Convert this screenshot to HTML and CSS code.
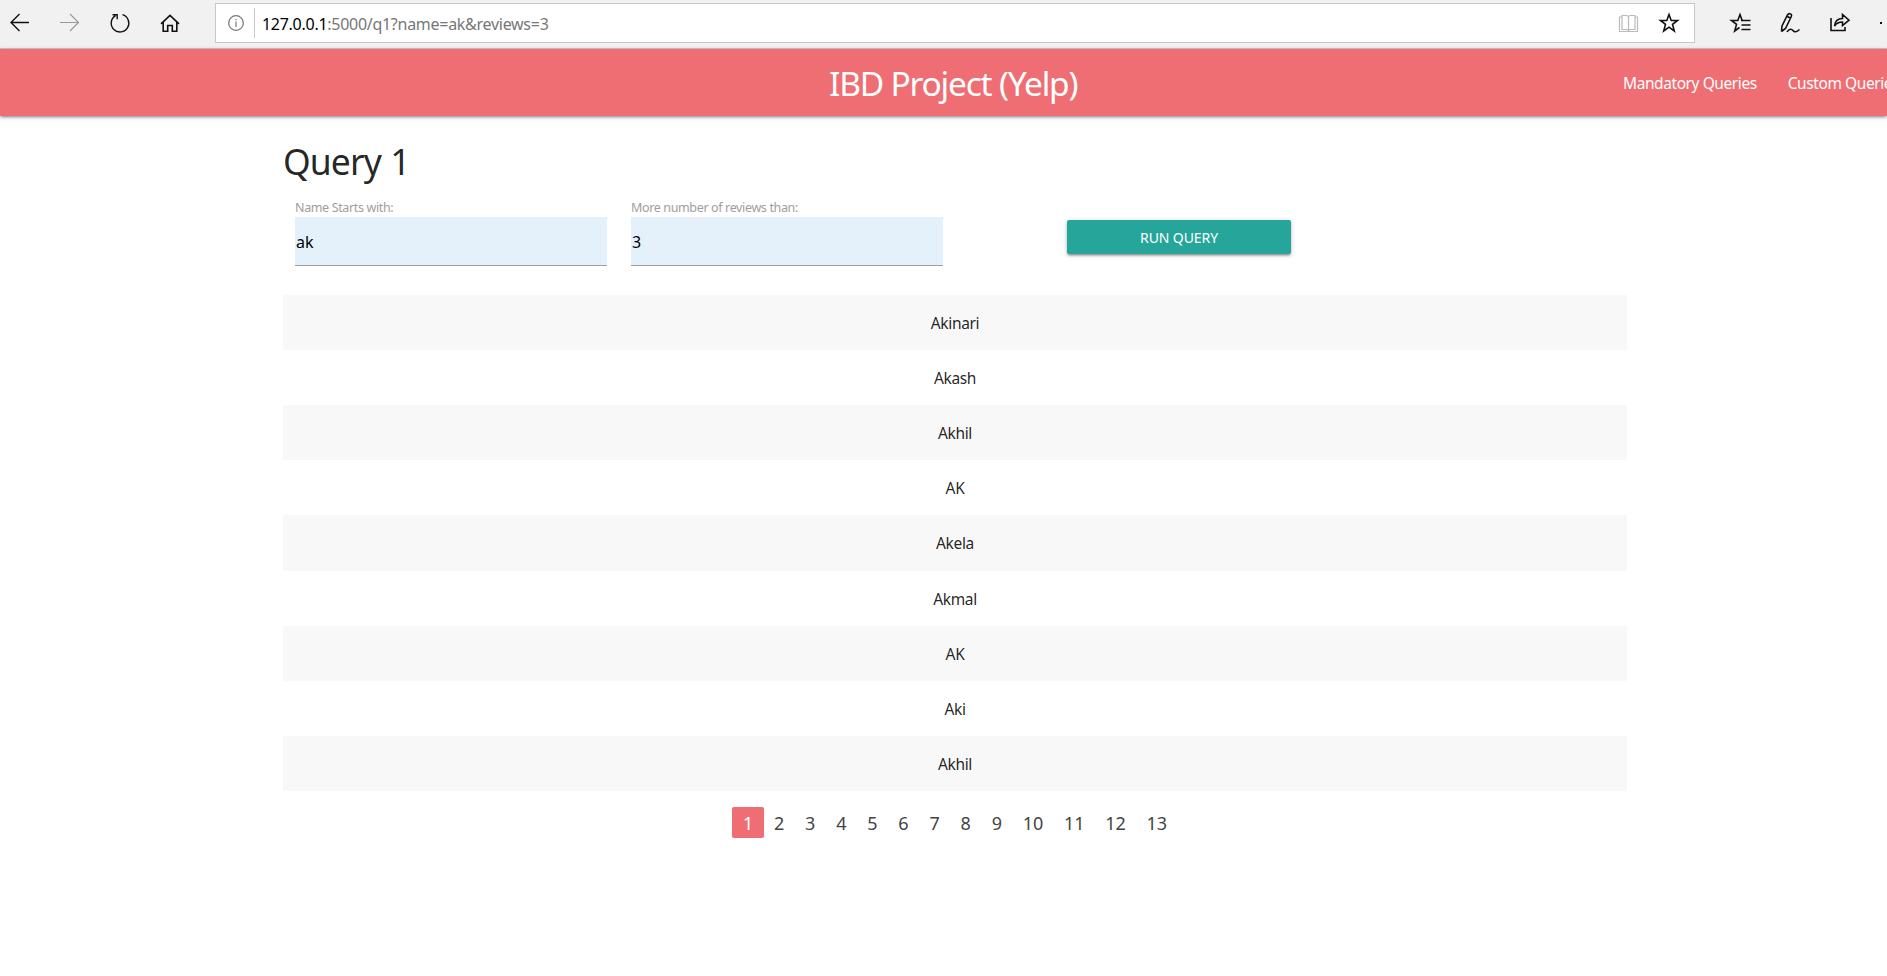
FILE: index.html
```html
<!DOCTYPE html>
<html lang="en">
<head>
<meta charset="utf-8">
<title>IBD Project (Yelp)</title>
<link rel="stylesheet" href="styles.css">
</head>
<body>
<div class="browser">
  <div class="controls">
    <svg class="icon" viewBox="0 0 24 24"><path class="medium" d="M3 11.500H21M11.500 3L3 11.500L11.500 20"/></svg>
    <svg class="icon muted" viewBox="0 0 24 24"><path d="M2 11.500H20.500M12 3L20.500 11.500L12 20"/></svg>
    <svg class="icon" viewBox="0 0 24 24"><path class="medium" d="M14.500 3.700A8.800 8.800 0 1 1 7.500 4.600M4.500 3.700H9.200V8.300"/></svg>
    <svg class="icon" viewBox="0 0 24 24"><path class="bold" d="M3 12.800L12 4.300L21 12.800M5.200 11V20.300H9.700V14.500H14.300V20.300H18.800V11"/></svg>
  </div>
  <div class="address">
    <svg class="icon info" viewBox="0 0 24 24"><circle cx="12" cy="12" r="7.300"/><path d="M12 10.500V16M12 8V9.300"/></svg>
    <div class="url"><span class="host">127.0.0.1</span>:5000/q1?name=ak&amp;reviews=3</div>
    <svg class="icon book" viewBox="0 0 24 24"><path d="M6 4.500H11L12.500 5.500L14 4.500H19V18.500H14L12.500 19.500L11 18.500H6ZM12.500 5.500V19.500M6 6H3.500V20.500H21.500V6H19"/></svg>
    <svg class="icon star" viewBox="0 0 24 24"><path class="bold" d="M12 3.500L14.200 9.500H20.500L15.500 13.400L17.300 20L12 16.200L6.700 20L8.500 13.400L3.500 9.500H9.800Z"/></svg>
  </div>
  <div class="tools">
    <svg class="icon" viewBox="0 0 24 24"><path class="bold" d="M14.700 9.500H13.200L11 3.500L8.800 9.500H2.500L7.500 13.400L5.700 20L10.500 16.500M12 9.500H21.500M12.500 14H21.500M12.500 18.500H21.500"/></svg>
    <svg class="icon" viewBox="0 0 24 24"><path class="bold" d="M2.500 20.500L3 15L8.500 4C10 1.500 13.500 3 12.300 5.500L6.500 17.500L2.500 20.500M8.500 5.500L12 7.500M8 21C10 17 13 18 14 19.500S17.500 21.500 20.500 18.500"/></svg>
    <svg class="icon" viewBox="0 0 24 24"><path class="bold" d="M2 7V19.500H16V16M5.500 15C6 10 9 7.500 13.500 7.500V3.500L20 9.200L13.500 14.500V11C10 11 7.500 12 5.500 15Z"/></svg>
    <span class="dot"></span>
  </div>
</div>
<nav class="navbar">
  <a class="brand">IBD Project (Yelp)</a>
  <div class="links"><a>Mandatory Queries</a><a>Custom Queries</a></div>
</nav>
<main class="container">
  <h4 class="heading">Query 1</h4>
  <form class="form">
    <div class="field"><label class="label">Name Starts with:</label><div class="input">ak</div></div>
    <div class="field"><label class="label">More number of reviews than:</label><div class="input">3</div></div>
    <button class="btn" type="button">RUN QUERY</button>
  </form>
  <div class="rows">
    <div class="row">Akinari</div>
    <div class="row">Akash</div>
    <div class="row">Akhil</div>
    <div class="row">AK</div>
    <div class="row">Akela</div>
    <div class="row">Akmal</div>
    <div class="row">AK</div>
    <div class="row">Aki</div>
    <div class="row">Akhil</div>
  </div>
  <ul class="pagination">
    <li class="active">1</li><li>2</li><li>3</li><li>4</li><li>5</li><li>6</li><li>7</li><li>8</li><li>9</li><li class="wide">10</li><li class="wide">11</li><li class="wide">12</li><li class="wide">13</li>
  </ul>
</main>
</body>
</html>
```
FILE: styles.css
```css
* { box-sizing: border-box; }
body { margin: 0; height: 976px; overflow: hidden; background: #fff; color: rgba(0,0,0,.87); font: 15px/1.5 "Noto Sans", "Open Sans", sans-serif; }
.browser { height: 49px; display: flex; align-items: flex-start; background: #f1f1f1; border-bottom: 1px solid #c6c6c6; padding-top: 3px; }
.controls { display: flex; width: 215px; padding: 8px 0 0 8px; gap: 26px; }
.icon { width: 24px; height: 24px; flex: none; fill: none; stroke: #111; stroke-width: 1.200; }
.medium { stroke-width: 1.400; }
.bold { stroke-width: 1.600; }
.muted { stroke: #999; }
.address { width: 1480px; height: 40px; flex: none; display: flex; align-items: center; background: #fff; border: 1px solid #c8c8c8; padding: 0 13px 0 8px; }
.info { stroke: #777; }
.url { flex: 1; height: 30px; margin-left: 6px; padding-left: 7px; border-left: 1px solid #c8c8c8; line-height: 32px; font-size: 16px; letter-spacing: -.28px; color: #777; }
.host { color: #000; }
.book { stroke: #bbb; margin-right: 17px; }
.tools { display: flex; align-items: center; flex: none; padding: 8px 0 0 34px; gap: 26px; }
.dot { width: 2px; height: 2px; background: #111; margin-left: 1px; }
.navbar { height: 67px; background: #ee6e73; color: #fff; display: grid; grid-template-columns: 1623px auto; box-shadow: 0 2px 2px rgba(0,0,0,.14), 0 3px 1px -2px rgba(0,0,0,.12), 0 1px 5px rgba(0,0,0,.2); line-height: 69px; white-space: nowrap; }
.brand { font-size: 33.500px; letter-spacing: -1.200px; padding-left: 829px; }
.links { display: flex; gap: 31px; font-size: 15.500px; letter-spacing: -.420px; overflow: hidden; }
.container { width: 1344px; margin: 0 0 0 283px; }
.heading { margin: 0; padding-top: 19px; height: 84px; font-size: 35.500px; letter-spacing: -.9px; word-spacing: 1px; line-height: 52px; font-weight: 400; }
.form { height: 95px; display: flex; padding-left: 12px; gap: 24px; margin: 0; }
.field { width: 312px; }
.label { display: block; height: 17px; line-height: 15px; font-size: 12.500px; letter-spacing: -.36px; color: #9e9e9e; }
.input { height: 49px; line-height: 50px; padding-left: 1px; font-size: 16px; color: #000; background: #e4f1fb; border-bottom: 1px solid #9e9e9e; }
.btn { width: 224px; height: 34px; margin: 20px 0 0 100px; padding: 1px 0 0; border: 0; border-radius: 2px; background: #26a69a; color: #fff; font: 14px/33px "Noto Sans", sans-serif; letter-spacing: -.1px; box-shadow: 0 2px 2px rgba(0,0,0,.2), 0 3px 1px -2px rgba(0,0,0,.12), 0 1px 5px rgba(0,0,0,.2); }
.row { height: 55.110px; line-height: 56px; text-align: center; font-size: 15.500px; letter-spacing: -.35px; }
.row:nth-child(odd) { background: #f8f8f8; }
.pagination { list-style: none; margin: 16px 0 0; padding: 0; display: flex; justify-content: center; color: #444; font-size: 18px; line-height: 32px; }
.pagination li { width: 31.100px; height: 31px; text-align: center; border-radius: 2px; }
.pagination .wide { width: 41.300px; }
.pagination .active { background: #ee6e73; color: #fff; }
```
